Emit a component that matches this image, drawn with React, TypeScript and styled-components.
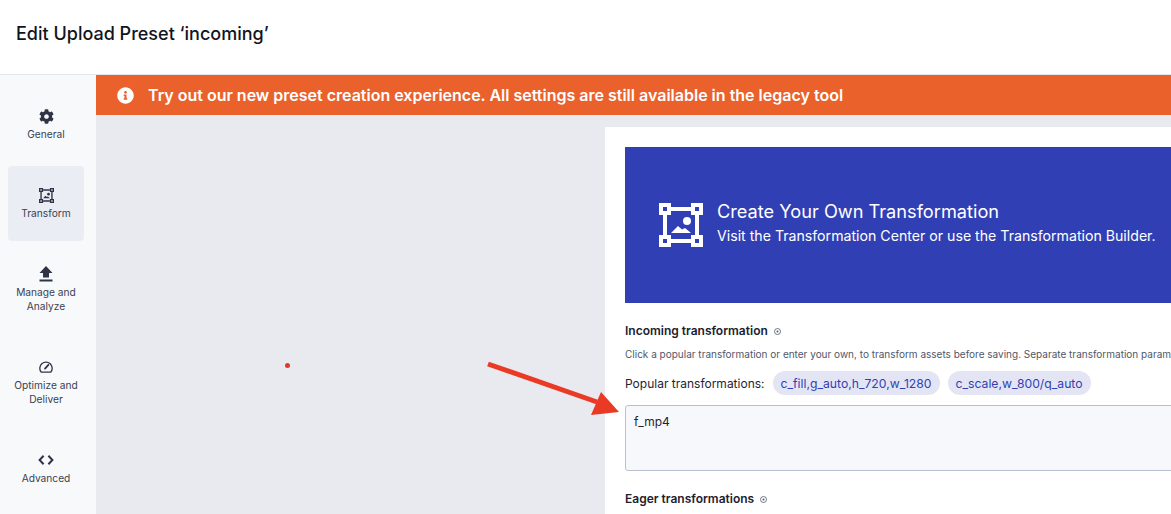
import React, { FC, ReactNode } from "react";
import styled, { createGlobalStyle } from "styled-components";
import { FaCog, FaInfoCircle } from "react-icons/fa";

const GlobalStyle = createGlobalStyle`
  html, body {
    margin: 0;
    padding: 0;
    height: 514px;
    overflow: hidden;
    background: #fff;
    font-family: Inter, "Liberation Sans", sans-serif;
    color: #1f2433;
  }
  * { box-sizing: border-box; }
`;

const Page = styled.div`
  position: relative;
  width: 1171px;
  height: 514px;
  overflow: hidden;
  display: flex;
  flex-direction: column;
`;

const Header = styled.header`
  height: 75px;
  flex: none;
  display: flex;
  align-items: center;
  padding: 0 16px 7px;
  background: #fff;
  border-bottom: 1px solid #e4e6ee;
`;

const Title = styled.h1`
  margin: 0;
  font-size: 18px;
  font-weight: 500;
  color: #11141d;
`;

const Body = styled.div`
  flex: 1;
  display: flex;
  min-height: 0;
`;

const Sidebar = styled.nav`
  width: 96px;
  flex: none;
  padding: 12px 12px 0 8px;
  display: flex;
  flex-direction: column;
  gap: 4px;
  background: #f8f9fb;
`;

const NavItem = styled.div<{ $active?: boolean }>`
  flex: none;
  border-radius: 4px;
  padding: 21px 0;
  display: flex;
  flex-direction: column;
  align-items: center;
  text-align: center;
  font-size: 10.2px;
  line-height: 14px;
  color: #3a4152;
  background: ${p => (p.$active ? "#ebedf4" : "transparent")};
`;

const NavIcon = styled.div`
  width: 16px;
  height: 16px;
  margin-bottom: 3px;
  display: flex;
  align-items: center;
  justify-content: center;
  color: #2e3445;
`;

const Main = styled.main`
  flex: 1;
  min-width: 0;
  display: flex;
  flex-direction: column;
  background: #e9eaf0;
`;

const Banner = styled.div`
  height: 40px;
  flex: none;
  display: flex;
  align-items: center;
  gap: 14px;
  padding-left: 21px;
  background: #ea612b;
  color: #fff;
  font-size: 16px;
  font-weight: 600;
`;

const Content = styled.div`
  flex: 1;
  padding: 12px 0 0 509px;
  min-height: 0;
`;

const Card = styled.section`
  width: 640px;
  height: 400px;
  padding: 20px;
  background: #fff;
`;

const Promo = styled.div`
  height: 156px;
  display: flex;
  align-items: center;
  gap: 14px;
  padding: 0 0 0 34px;
  background: #303fb4;
  color: #fff;
`;

const PromoText = styled.div`
  display: flex;
  flex-direction: column;
  gap: 5px;
  margin-top: -4px;
`;

const PromoTitle = styled.div`
  font-size: 18.2px;
  line-height: 21px;
`;

const PromoSub = styled.div`
  font-size: 14.15px;
  line-height: 18px;
  white-space: nowrap;
`;

const FieldLabel = styled.div`
  display: flex;
  align-items: center;
  gap: 6px;
  font-size: 12px;
  line-height: 16px;
  font-weight: 600;
  color: #1c2130;
`;

const Hint = styled.div`
  margin-top: 8px;
  font-size: 10px;
  line-height: 14px;
  color: #50576a;
  white-space: nowrap;
`;

const PopularRow = styled.div`
  margin-top: 10px;
  display: flex;
  align-items: center;
  font-size: 12px;
  color: #1f2433;
  white-space: nowrap;
`;

const PopularLabel = styled.span`
  margin-right: 8px;
`;

const Chip = styled.span`
  height: 24px;
  display: inline-flex;
  align-items: center;
  padding: 0 8px;
  margin-right: 8px;
  border-radius: 12px;
  background: #e3e5f5;
  color: #303fb4;
  font-size: 12.2px;
`;

const TransformInput = styled.div`
  margin-top: 10px;
  width: 100%;
  height: 66px;
  padding: 8px;
  border: 1px solid #b9bfd3;
  border-radius: 3px;
  background: #f7f8fb;
  font-size: 12px;
  line-height: 16px;
  color: #1f2433;
`;

const FieldGroup = styled.div`
  margin-top: 20px;
`;

const Overlay = styled.svg`
  position: absolute;
  left: 0;
  top: 0;
  pointer-events: none;
`;

const InfoDot: FC = () => (
  <svg width="7" height="7" viewBox="0 0 7 7" fill="none">
    <circle cx="3.5" cy="3.5" r="3" stroke="#50576a" strokeWidth="0.8" />
    <circle cx="3.5" cy="3.5" r="1" fill="#50576a" />
  </svg>
);

// same drawing in the sidebar and on the blue panel, only the size differs
const TransformGlyph: FC<{ size: number }> = ({ size }) => (
  <svg width={size} height={size} viewBox="0 0 44 44" fill="currentColor">
    <path
      fillRule="evenodd"
      d="M0 0H12V12H0ZM4 4V8H8V4ZM32 0H44V12H32ZM36 4V8H40V4ZM0 32H12V44H0ZM4 36V40H8V36ZM32 32H44V44H32ZM36 36V40H40V36Z"
    />
    <path d="M12 4H32V8H12ZM12 36H32V40H12ZM4 12H8V32H4ZM36 12H40V32H36Z" />
    <circle cx="28" cy="18" r="4" />
    <path d="M12 30 L19 23 L23 26.5 L26 25 L32 30 Z" />
  </svg>
);

const UploadGlyph: FC = () => (
  <svg width="14" height="16" viewBox="0 0 14 16" fill="currentColor">
    <path d="M7 0 L13.5 7 H10 V11.5 H4 V7 H0.5 Z" />
    <rect x="0.5" y="13.5" width="13" height="2" />
  </svg>
);

const GaugeGlyph: FC = () => (
  <svg width="14" height="12" viewBox="0 0 14 12" fill="none" stroke="currentColor" strokeWidth="1.3">
    <path d="M2.2 11.2 A6.2 6.2 0 1 1 11.8 11.2 Z" strokeLinejoin="round" />
    <path d="M6 7.6 L9.4 3.8" strokeWidth="1.8" strokeLinecap="round" />
  </svg>
);

const CodeGlyph: FC = () => (
  <svg width="16" height="10" viewBox="0 0 16 10" fill="none" stroke="currentColor" strokeWidth="2">
    <path d="M5.6 0.8 L1.6 5 L5.6 9.2" />
    <path d="M10.4 0.8 L14.4 5 L10.4 9.2" />
  </svg>
);

type NavEntry = { label: ReactNode; icon: ReactNode; active?: boolean };

const navEntries: NavEntry[] = [
  { label: "General", icon: <FaCog size={15} /> },
  { label: "Transform", icon: <TransformGlyph size={15} />, active: true },
  { label: <>Manage and<br />Analyze</>, icon: <UploadGlyph /> },
  { label: <>Optimize and<br />Deliver</>, icon: <GaugeGlyph /> },
  { label: "Advanced", icon: <CodeGlyph /> }
];

const App: FC = () => (
  <Page>
    <GlobalStyle />
    <Header>
      <Title>Edit Upload Preset ‘incoming’</Title>
    </Header>
    <Body>
      <Sidebar>
        {navEntries.map((entry, i) => (
          <NavItem key={i} $active={entry.active}>
            <NavIcon>{entry.icon}</NavIcon>
            {entry.label}
          </NavItem>
        ))}
      </Sidebar>
      <Main>
        <Banner>
          <FaInfoCircle size={17} />
          Try out our new preset creation experience. All settings are still available in the legacy tool
        </Banner>
        <Content>
          <Card>
            <Promo>
              <TransformGlyph size={44} />
              <PromoText>
                <PromoTitle>Create Your Own Transformation</PromoTitle>
                <PromoSub>Visit the Transformation Center or use the Transformation Builder.</PromoSub>
              </PromoText>
            </Promo>
            <FieldGroup>
              <FieldLabel>
                Incoming transformation <InfoDot />
              </FieldLabel>
              <Hint>
                Click a popular transformation or enter your own, to transform assets before saving. Separate
                transformation parameters with commas.
              </Hint>
              <PopularRow>
                <PopularLabel>Popular transformations:</PopularLabel>
                <Chip>c_fill,g_auto,h_720,w_1280</Chip>
                <Chip>c_scale,w_800/q_auto</Chip>
              </PopularRow>
              <TransformInput>f_mp4</TransformInput>
            </FieldGroup>
            <FieldGroup>
              <FieldLabel>
                Eager transformations <InfoDot />
              </FieldLabel>
            </FieldGroup>
          </Card>
        </Content>
      </Main>
    </Body>
    <Overlay width="1171" height="514" viewBox="0 0 1171 514">
      <circle cx="287.5" cy="365.5" r="2.5" fill="#e5372a" />
      <path d="M488 364 L597 402" stroke="#ea3a25" strokeWidth="5" />
      <path d="M601 392 L619 412 L591 415 Z" fill="#ea3a25" />
    </Overlay>
  </Page>
);

export default App;
